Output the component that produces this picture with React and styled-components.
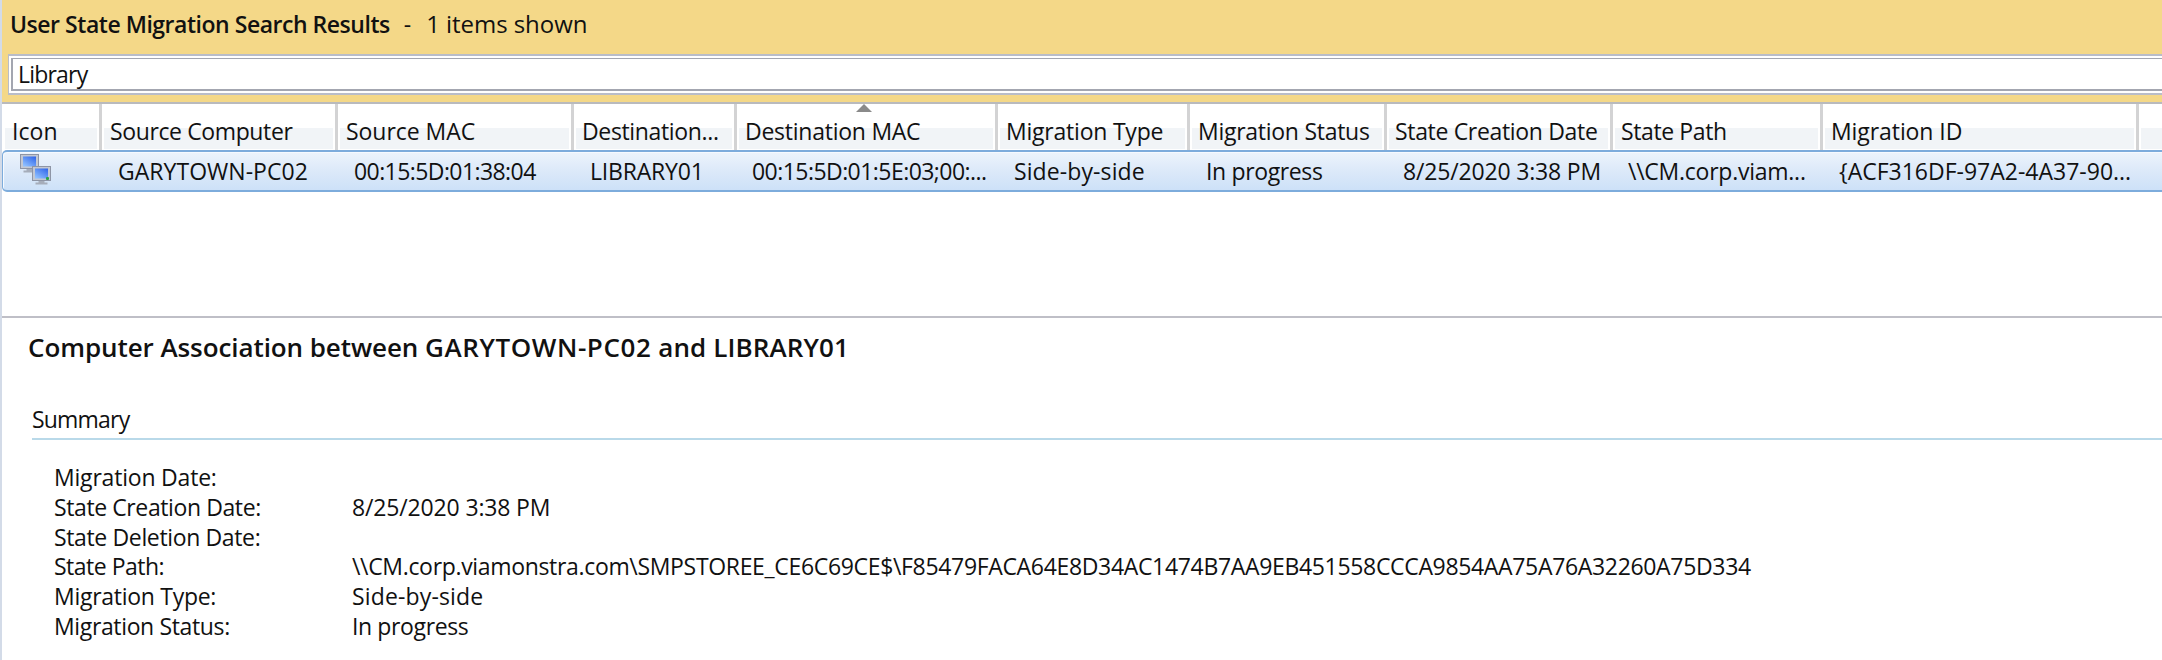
import React from 'react';
import styled, { createGlobalStyle } from 'styled-components';

const Global = createGlobalStyle`
  * { box-sizing: border-box; }
  body {
    margin: 0;
    overflow: hidden;
    background: #fff;
    color: #111;
    font-family: "Open Sans", "Segoe UI", sans-serif;
    font-size: 23px;
    line-height: 30px;
  }
`;

const Console = styled.main`
  height: 660px;
  display: flex;
  flex-direction: column;
  border-left: 2px solid #d3dbe8;
`;

const SearchHeader = styled.header`
  flex: none;
  height: 102px;
  padding: 9px 0 0 6px;
  background: #f4d888;
`;

const TitleBar = styled.div`
  display: flex;
  height: 45px;
  padding-left: 2px;
  white-space: pre;
`;

const Label = styled.span`
  white-space: pre;
  font-weight: ${(p) => p.$weight || 400};
  font-size: ${(p) => p.$size || 23}px;
  letter-spacing: ${(p) => p.$track || 0}px;
`;

const Title = styled(Label)`
  margin-right: 14px;
`;

const Dash = styled(Label)`
  margin-right: 15px;
`;

const SearchFrame = styled.div`
  height: 41px;
  padding: 2px 0 2px 2px;
  border: solid #b9bdc9;
  border-width: 2px 0 2px 1px;
  background: #fff;
`;

const SearchField = styled.div`
  height: 33px;
  padding-left: 5px;
  border: solid #a3a6b0;
  border-width: 1px 0 2px 2px;
  line-height: 31px;
`;

const Grid = styled.section`
  flex: none;
  height: 214px;
  border-top: 2px solid #b9babd;
`;

const columns = `99px 236px 236px 163px 261px 192px 197px 226px 210px 316px 1fr`;

const HeaderRow = styled.div`
  display: grid;
  grid-template-columns: ${columns};
  height: 46px;
  margin-left: 1px;
`;

const HeaderCell = styled.div`
  position: relative;
  padding: 12px 0 0 ${(p) => p.$pad || 8}px;
  border-right: ${(p) => (p.$last ? 0 : 3)}px solid #d3d3d4;
  background: linear-gradient(#f1f4f7, #f1f4f7) 2px 24px / ${(p) => (p.$last ? '100%' : 'calc(100% - 4px)')} 21px no-repeat;
`;

const SortArrow = styled.span`
  position: absolute;
  top: 0;
  left: calc(50% - 10px);
  border: solid transparent;
  border-width: 0 8px 8px;
  border-bottom-color: #8a8a8a;
`;

const DataRow = styled.div`
  display: grid;
  grid-template-columns: ${columns};
  height: 42px;
  border: solid #7dacdc;
  border-width: 2px 0 2px 1px;
  border-radius: 5px 0 0 5px;
  background: linear-gradient(#edf4fc, #dce9f9 50%, #cde1f8);
  box-shadow: inset 1px 1px 0 #f6faff;
`;

const Cell = styled.div`
  padding: 4px 0 0 ${(p) => p.$pad || 16}px;
`;

const Details = styled.section`
  flex: 1;
  border-top: 2px solid #bfbfc7;
`;

const Heading = styled.h1`
  margin: 0;
  padding: 14px 0 0 26px;
  height: 85px;
  font-size: 26px;
  line-height: 30px;
`;

const Summary = styled.h2`
  margin: 0 0 0 30px;
  height: 37px;
  padding-top: 1px;
  border-bottom: 2px solid #b9d9e9;
  font-weight: 400;
  font-size: 23px;
`;

const Fields = styled.dl`
  display: grid;
  grid-template-columns: 298px 1fr;
  grid-auto-rows: 29.8px;
  margin: 22px 0 0 52px;
`;

const Term = styled.dt`
  margin: 0;
`;

const Value = styled.dd`
  margin: 0;
`;

const headers = [
  ['Icon', 0.07, 9],
  ['Source Computer', -0.38],
  ['Source MAC', -0.05],
  ['Destination...', -0.35],
  ['Destination MAC', -0.25],
  ['Migration Type', -0.22],
  ['Migration Status', -0.27, 8],
  ['State Creation Date', -0.33],
  ['State Path', -0.39],
  ['Migration ID', -0.08],
];

const cells = [
  ['GARYTOWN-PC02', 0.03],
  ['00:15:5D:01:38:04', -0.58],
  ['LIBRARY01', -0.2],
  ['00:15:5D:01:5E:03;00:...', -0.55, 15],
  ['Side-by-side', 0.1],
  ['In progress', -0.36, 16],
  ['8/25/2020 3:38 PM', -0.17],
  ['\\\\CM.corp.viam...', -0.25, 15],
  ['{ACF316DF-97A2-4A37-90...', 0, 16],
];

const fields = [
  { term: 'Migration Date:', track: -0.2 },
  { term: 'State Creation Date:', track: -0.4, value: '8/25/2020 3:38 PM', valueTrack: -0.15 },
  { term: 'State Deletion Date:', track: -0.36 },
  {
    term: 'State Path:',
    track: -0.5,
    value:
      '\\\\CM.corp.viamonstra.com\\SMPSTOREE_CE6C69CE$\\F85479FACA64E8D34AC1474B7AA9EB451558CCCA9854AA75A76A32260A75D334',
    valueTrack: -0.33,
  },
  { term: 'Migration Type:', track: -0.28, value: 'Side-by-side', valueTrack: 0.15 },
  { term: 'Migration Status:', track: -0.36, value: 'In progress', valueTrack: -0.38 },
];

const IconSvg = styled.svg`
  display: block;
  width: 34px;
  height: 34px;
`;

const IconCell = styled.div`
  padding: 2px 0 0 17px;
`;

function Monitor({ x, y, online }) {
  return (
    <g transform={`translate(${x} ${y})`}>
      <path d="M6.5 14.5h6v2h3v2h-12v-2h3z" fill="#a6adba" />
      <rect x="0.5" y="0.5" width="18" height="14" fill="#c3c8d2" stroke="#8e95a5" />
      <rect x="3" y="2.5" width="13" height="10" fill="url(#screen)" />
      {online && <rect x="14" y="11" width="3" height="3" rx="1" fill="#2ba345" />}
    </g>
  );
}

function ComputersIcon() {
  return (
    <IconSvg viewBox="0 0 34 34">
      <defs>
        <linearGradient id="screen" x1="1" y1="0" x2="0.2" y2="1">
          <stop offset="0" stopColor="#2c62e8" />
          <stop offset="1" stopColor="#8fc0ff" />
        </linearGradient>
      </defs>
      <Monitor x={0} y={0} />
      <Monitor x={12} y={12} online />
    </IconSvg>
  );
}

export default function App() {
  return (
    <Console>
      <Global />
      <SearchHeader>
        <TitleBar>
          <Title $weight={600} $track={-0.47}>User State Migration Search Results</Title>
          <Dash>-</Dash>
          <Label $size={24} $track={-0.05}>1 items shown</Label>
        </TitleBar>
        <SearchFrame>
          <SearchField><Label $track={-0.8}>Library</Label></SearchField>
        </SearchFrame>
      </SearchHeader>
      <Grid>
        <HeaderRow>
          {headers.map(([text, track, pad]) => (
            <HeaderCell key={text} $pad={pad}>
              <Label $track={track}>{text}</Label>
              {text === 'Destination MAC' && <SortArrow />}
            </HeaderCell>
          ))}
          <HeaderCell $last />
        </HeaderRow>
        <DataRow>
          <IconCell><ComputersIcon /></IconCell>
          {cells.map(([text, track, pad]) => (
            <Cell key={text} $pad={pad}><Label $track={track}>{text}</Label></Cell>
          ))}
        </DataRow>
      </Grid>
      <Details>
        <Heading>
          <Label $weight={600} $size={26} $track={-0.08}>{'Computer Association between '}</Label>
          <Label $weight={600} $size={26} $track={0.6}>GARYTOWN-PC02</Label>
          <Label $weight={600} $size={26} $track={0.1}>{' and LIBRARY01'}</Label>
        </Heading>
        <Summary><Label $track={-0.8}>Summary</Label></Summary>
        <Fields>
          {fields.map((f) => (
            <React.Fragment key={f.term}>
              <Term><Label $track={f.track}>{f.term}</Label></Term>
              <Value><Label $track={f.valueTrack}>{f.value}</Label></Value>
            </React.Fragment>
          ))}
        </Fields>
      </Details>
    </Console>
  );
}
